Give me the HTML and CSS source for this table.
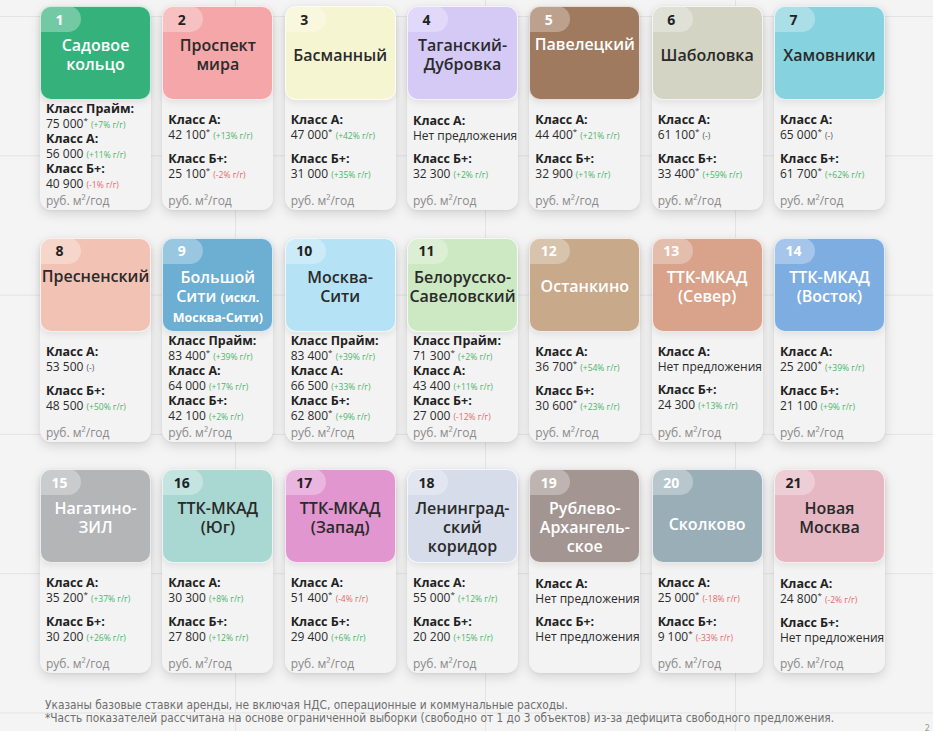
FILE: index.html
```html
<!DOCTYPE html>
<html lang="ru">
<head>
<meta charset="utf-8">
<title>Ставки аренды</title>
<link rel="stylesheet" href="styles.css">
</head>
<body>
<main class="page">
  <section class="grid">

    <div class="card light-text">
      <div class="head c1"><span class="num">1</span><div class="title"><span>Садовое<br>кольцо</span></div></div>
      <div class="body">
        <div class="rates dense">
          <div class="rate"><div class="lbl">Класс Прайм:</div><div class="val">75 000<sup>*</sup> <span class="up">(+7% г/г)</span></div></div>
          <div class="rate"><div class="lbl">Класс А:</div><div class="val">56 000 <span class="up">(+11% г/г)</span></div></div>
          <div class="rate"><div class="lbl">Класс Б+:</div><div class="val">40 900 <span class="down">(-1% г/г)</span></div></div>
        </div>
        <div class="unit">руб. м²/год</div>
      </div>
    </div>

    <div class="card">
      <div class="head c2"><span class="num">2</span><div class="title"><span>Проспект<br>мира</span></div></div>
      <div class="body">
        <div class="rates">
          <div class="rate"><div class="lbl">Класс А:</div><div class="val">42 100<sup>*</sup> <span class="up">(+13% г/г)</span></div></div>
          <div class="rate"><div class="lbl">Класс Б+:</div><div class="val">25 100<sup>*</sup> <span class="down">(-2% г/г)</span></div></div>
        </div>
        <div class="unit">руб. м²/год</div>
      </div>
    </div>

    <div class="card">
      <div class="head c3"><span class="num">3</span><div class="title"><span>Басманный</span></div></div>
      <div class="body">
        <div class="rates">
          <div class="rate"><div class="lbl">Класс А:</div><div class="val">47 000<sup>*</sup> <span class="up">(+42% г/г)</span></div></div>
          <div class="rate"><div class="lbl">Класс Б+:</div><div class="val">31 000 <span class="up">(+35% г/г)</span></div></div>
        </div>
        <div class="unit">руб. м²/год</div>
      </div>
    </div>

    <div class="card">
      <div class="head c4"><span class="num">4</span><div class="title"><span>Таганский-<br>Дубровка</span></div></div>
      <div class="body">
        <div class="rates">
          <div class="rate"><div class="lbl">Класс А:</div><div class="val">Нет предложения</div></div>
          <div class="rate"><div class="lbl">Класс Б+:</div><div class="val">32 300 <span class="up">(+2% г/г)</span></div></div>
        </div>
        <div class="unit">руб. м²/год</div>
      </div>
    </div>

    <div class="card light-text">
      <div class="head c5"><span class="num">5</span><div class="title top"><span>Павелецкий</span></div></div>
      <div class="body">
        <div class="rates">
          <div class="rate"><div class="lbl">Класс А:</div><div class="val">44 400<sup>*</sup> <span class="up">(+21% г/г)</span></div></div>
          <div class="rate"><div class="lbl">Класс Б+:</div><div class="val">32 900 <span class="up">(+1% г/г)</span></div></div>
        </div>
        <div class="unit">руб. м²/год</div>
      </div>
    </div>

    <div class="card">
      <div class="head c6"><span class="num">6</span><div class="title"><span>Шаболовка</span></div></div>
      <div class="body">
        <div class="rates">
          <div class="rate"><div class="lbl">Класс А:</div><div class="val">61 100<sup>*</sup> <span class="flat">(-)</span></div></div>
          <div class="rate"><div class="lbl">Класс Б+:</div><div class="val">33 400<sup>*</sup> <span class="up">(+59% г/г)</span></div></div>
        </div>
        <div class="unit">руб. м²/год</div>
      </div>
    </div>

    <div class="card">
      <div class="head c7"><span class="num">7</span><div class="title"><span>Хамовники</span></div></div>
      <div class="body">
        <div class="rates">
          <div class="rate"><div class="lbl">Класс А:</div><div class="val">65 000<sup>*</sup> <span class="flat">(-)</span></div></div>
          <div class="rate"><div class="lbl">Класс Б+:</div><div class="val">61 700<sup>*</sup> <span class="up">(+62% г/г)</span></div></div>
        </div>
        <div class="unit">руб. м²/год</div>
      </div>
    </div>

    <div class="card">
      <div class="head c8"><span class="num">8</span><div class="title top"><span>Пресненский</span></div></div>
      <div class="body">
        <div class="rates">
          <div class="rate"><div class="lbl">Класс А:</div><div class="val">53 500 <span class="flat">(-)</span></div></div>
          <div class="rate"><div class="lbl">Класс Б+:</div><div class="val">48 500 <span class="up">(+50% г/г)</span></div></div>
        </div>
        <div class="unit">руб. м²/год</div>
      </div>
    </div>

    <div class="card light-text">
      <div class="head c9"><span class="num">9</span><div class="title"><span>Большой<br>Сити <small>(искл.</small><br><small>Москва-Сити)</small></span></div></div>
      <div class="body">
        <div class="rates dense">
          <div class="rate"><div class="lbl">Класс Прайм:</div><div class="val">83 400<sup>*</sup> <span class="up">(+39% г/г)</span></div></div>
          <div class="rate"><div class="lbl">Класс А:</div><div class="val">64 000 <span class="up">(+17% г/г)</span></div></div>
          <div class="rate"><div class="lbl">Класс Б+:</div><div class="val">42 100 <span class="up">(+2% г/г)</span></div></div>
        </div>
        <div class="unit">руб. м²/год</div>
      </div>
    </div>

    <div class="card">
      <div class="head c10"><span class="num">10</span><div class="title"><span>Москва-<br>Сити</span></div></div>
      <div class="body">
        <div class="rates dense">
          <div class="rate"><div class="lbl">Класс Прайм:</div><div class="val">83 400<sup>*</sup> <span class="up">(+39% г/г)</span></div></div>
          <div class="rate"><div class="lbl">Класс А:</div><div class="val">66 500 <span class="up">(+33% г/г)</span></div></div>
          <div class="rate"><div class="lbl">Класс Б+:</div><div class="val">62 800<sup>*</sup> <span class="up">(+9% г/г)</span></div></div>
        </div>
        <div class="unit">руб. м²/год</div>
      </div>
    </div>

    <div class="card">
      <div class="head c11"><span class="num">11</span><div class="title"><span>Белорусско-<br>Савеловский</span></div></div>
      <div class="body">
        <div class="rates dense">
          <div class="rate"><div class="lbl">Класс Прайм:</div><div class="val">71 300<sup>*</sup> <span class="up">(+2% г/г)</span></div></div>
          <div class="rate"><div class="lbl">Класс А:</div><div class="val">43 400 <span class="up">(+11% г/г)</span></div></div>
          <div class="rate"><div class="lbl">Класс Б+:</div><div class="val">27 000 <span class="down">(-12% г/г)</span></div></div>
        </div>
        <div class="unit">руб. м²/год</div>
      </div>
    </div>

    <div class="card light-text">
      <div class="head c12"><span class="num">12</span><div class="title"><span>Останкино</span></div></div>
      <div class="body">
        <div class="rates">
          <div class="rate"><div class="lbl">Класс А:</div><div class="val">36 700<sup>*</sup> <span class="up">(+54% г/г)</span></div></div>
          <div class="rate"><div class="lbl">Класс Б+:</div><div class="val">30 600<sup>*</sup> <span class="up">(+23% г/г)</span></div></div>
        </div>
        <div class="unit">руб. м²/год</div>
      </div>
    </div>

    <div class="card light-text">
      <div class="head c13"><span class="num">13</span><div class="title"><span>ТТК-МКАД<br>(Север)</span></div></div>
      <div class="body">
        <div class="rates">
          <div class="rate"><div class="lbl">Класс А:</div><div class="val">Нет предложения</div></div>
          <div class="rate"><div class="lbl">Класс Б+:</div><div class="val">24 300 <span class="up">(+13% г/г)</span></div></div>
        </div>
        <div class="unit">руб. м²/год</div>
      </div>
    </div>

    <div class="card light-text">
      <div class="head c14"><span class="num">14</span><div class="title"><span>ТТК-МКАД<br>(Восток)</span></div></div>
      <div class="body">
        <div class="rates">
          <div class="rate"><div class="lbl">Класс А:</div><div class="val">25 200<sup>*</sup> <span class="up">(+39% г/г)</span></div></div>
          <div class="rate"><div class="lbl">Класс Б+:</div><div class="val">21 100 <span class="up">(+9% г/г)</span></div></div>
        </div>
        <div class="unit">руб. м²/год</div>
      </div>
    </div>

    <div class="card light-text">
      <div class="head c15"><span class="num">15</span><div class="title"><span>Нагатино-<br>ЗИЛ</span></div></div>
      <div class="body">
        <div class="rates">
          <div class="rate"><div class="lbl">Класс А:</div><div class="val">35 200<sup>*</sup> <span class="up">(+37% г/г)</span></div></div>
          <div class="rate"><div class="lbl">Класс Б+:</div><div class="val">30 200 <span class="up">(+26% г/г)</span></div></div>
        </div>
        <div class="unit">руб. м²/год</div>
      </div>
    </div>

    <div class="card">
      <div class="head c16"><span class="num">16</span><div class="title"><span>ТТК-МКАД<br>(Юг)</span></div></div>
      <div class="body">
        <div class="rates">
          <div class="rate"><div class="lbl">Класс А:</div><div class="val">30 300 <span class="up">(+8% г/г)</span></div></div>
          <div class="rate"><div class="lbl">Класс Б+:</div><div class="val">27 800 <span class="up">(+12% г/г)</span></div></div>
        </div>
        <div class="unit">руб. м²/год</div>
      </div>
    </div>

    <div class="card">
      <div class="head c17"><span class="num">17</span><div class="title"><span>ТТК-МКАД<br>(Запад)</span></div></div>
      <div class="body">
        <div class="rates">
          <div class="rate"><div class="lbl">Класс А:</div><div class="val">51 400<sup>*</sup> <span class="down">(-4% г/г)</span></div></div>
          <div class="rate"><div class="lbl">Класс Б+:</div><div class="val">29 400 <span class="up">(+6% г/г)</span></div></div>
        </div>
        <div class="unit">руб. м²/год</div>
      </div>
    </div>

    <div class="card">
      <div class="head c18"><span class="num">18</span><div class="title"><span>Ленинград-<br>ский<br>коридор</span></div></div>
      <div class="body">
        <div class="rates">
          <div class="rate"><div class="lbl">Класс А:</div><div class="val">55 000<sup>*</sup> <span class="up">(+12% г/г)</span></div></div>
          <div class="rate"><div class="lbl">Класс Б+:</div><div class="val">20 200 <span class="up">(+15% г/г)</span></div></div>
        </div>
        <div class="unit">руб. м²/год</div>
      </div>
    </div>

    <div class="card light-text">
      <div class="head c19"><span class="num">19</span><div class="title"><span>Рублево-<br>Архангель-<br>ское</span></div></div>
      <div class="body">
        <div class="rates">
          <div class="rate"><div class="lbl">Класс А:</div><div class="val">Нет предложения</div></div>
          <div class="rate"><div class="lbl">Класс Б+:</div><div class="val">Нет предложения</div></div>
        </div>
        <div class="unit blank">&nbsp;</div>
      </div>
    </div>

    <div class="card light-text">
      <div class="head c20"><span class="num">20</span><div class="title low"><span>Сколково</span></div></div>
      <div class="body">
        <div class="rates">
          <div class="rate"><div class="lbl">Класс А:</div><div class="val">25 000<sup>*</sup> <span class="down">(-18% г/г)</span></div></div>
          <div class="rate"><div class="lbl">Класс Б+:</div><div class="val">9 100<sup>*</sup> <span class="down">(-33% г/г)</span></div></div>
        </div>
        <div class="unit">руб. м²/год</div>
      </div>
    </div>

    <div class="card">
      <div class="head c21"><span class="num">21</span><div class="title"><span>Новая<br>Москва</span></div></div>
      <div class="body">
        <div class="rates">
          <div class="rate"><div class="lbl">Класс А:</div><div class="val">24 800<sup>*</sup> <span class="down">(-2% г/г)</span></div></div>
          <div class="rate"><div class="lbl">Класс Б+:</div><div class="val">Нет предложения</div></div>
        </div>
        <div class="unit">руб. м²/год</div>
      </div>
    </div>

  </section>

  <footer class="foot">
    <div class="notes">
      <p>Указаны базовые ставки аренды, не включая НДС, операционные и коммунальные расходы.</p>
      <p>*Часть показателей рассчитана на основе ограниченной выборки (свободно от 1 до 3 объектов) из-за дефицита свободного предложения.</p>
    </div>
    <div class="pageno">2</div>
  </footer>
</main>
</body>
</html>
```

FILE: styles.css
```css
* { box-sizing: border-box; }

html, body {
  margin: 0;
  padding: 0;
}

body {
  width: 933px;
  height: 731px;
  overflow: hidden;
  font-family: "Open Sans", "DejaVu Sans", sans-serif;
  color: #262626;
  background-color: #f4f4f4;
  background-image:
    linear-gradient(to right, #e3e3e3 1px, transparent 1px),
    linear-gradient(to bottom, #e3e3e3 1px, transparent 1px);
  background-size: 250px 139.3px;
  background-position: 235px 16px;
}

.page {
  display: flex;
  flex-direction: column;
  padding: 6px 0 0 40px;
}

.grid {
  display: grid;
  grid-template-columns: repeat(7, 111px);
  column-gap: 11.33px;
  row-gap: 27.5px;
}

.card {
  height: 204px;
  display: flex;
  flex-direction: column;
  background: #f3f3f3;
  border-radius: 11px;
  box-shadow: 0 4px 12px rgba(0, 0, 0, 0.13), 0 1px 3px rgba(0, 0, 0, 0.05);
}

.head {
  height: 94px;
  flex: none;
  display: flex;
  flex-direction: column;
  border-radius: 11px;
  border: 1.5px solid rgba(255, 255, 255, 0.75);
  overflow: hidden;
  box-shadow: 0 3px 6px rgba(0, 0, 0, 0.07);
}

.num {
  align-self: flex-start;
  width: 41px;
  height: 26px;
  flex: none;
  display: flex;
  align-items: center;
  justify-content: center;
  padding-right: 2px;
  margin: -1px 0 0 -1px;
  border-radius: 0 14px 14px 0;
  background: rgba(255, 255, 255, 0.3);
  font-weight: 700;
  font-size: 14px;
  color: #222;
}

.title {
  margin-top: 4px;
  min-height: 38px;
  display: flex;
  align-items: center;
  justify-content: center;
  text-align: center;
  font-size: 16px;
  line-height: 19px;
  font-weight: 600;
  color: #2a2a2a;
  white-space: nowrap;
}

.title.top { align-items: flex-start; margin-top: 3px; }
.title.low { margin-top: 10px; }

.title small {
  font-size: 12.5px;
  font-weight: 700;
}

.light-text .num { color: #fff; }
.light-text .title { color: #fff; }

.body {
  flex: 1;
  display: flex;
  flex-direction: column;
  padding: 0 4px 2px 6px;
}

.rates {
  flex: 1;
  display: flex;
  flex-direction: column;
  justify-content: center;
  gap: 8px;
}

.rates.dense { gap: 0; }

.lbl {
  font-size: 12.5px;
  line-height: 15px;
  font-weight: 700;
  color: #222;
  white-space: nowrap;
}

.rates.dense .lbl { line-height: 14px; }

.val {
  font-size: 12px;
  line-height: 15px;
  color: #2b2b2b;
  white-space: nowrap;
}

.val sup {
  font-size: 8px;
  line-height: 0;
  vertical-align: 5px;
}

.up, .down, .flat {
  font-size: 8.5px;
}

.up { color: #4bb36b; }
.down { color: #e46a6a; }
.flat { color: #555; }

.unit {
  font-size: 12px;
  line-height: 14px;
  color: #8a8a8a;
  flex: none;
}

.unit.blank { visibility: hidden; }

.foot {
  display: flex;
  justify-content: space-between;
  margin-top: 26px;
  padding-left: 5px;
  font-family: "DejaVu Sans Condensed", "DejaVu Sans", sans-serif;
  font-stretch: condensed;
  color: #6e6e6e;
}

.notes p {
  margin: 0;
  font-size: 11.8px;
  line-height: 13px;
}

.pageno {
  align-self: flex-end;
  font-size: 9px;
  color: #999;
  margin: 0 3px -8px 0;
}

.c1 { background: #35b27c; }
.c2 { background: #f4a6a8; }
.c3 { background: #f6f5d2; }
.c4 { background: #d5c9f6; }
.c5 { background: #a07a5e; }
.c6 { background: #d3d4c4; }
.c7 { background: #86d2de; }
.c8 { background: #f2c3b5; }
.c9 { background: #6daed3; }
.c10 { background: #b5e3f5; }
.c11 { background: #cde9c3; }
.c12 { background: #c8a98a; }
.c13 { background: #d8a38a; }
.c14 { background: #7eaee1; }
.c15 { background: #b3b5b6; }
.c16 { background: #a9d8d2; }
.c17 { background: #e196d0; }
.c18 { background: #d6dcea; }
.c19 { background: #a39592; }
.c20 { background: #9aaeb8; }
.c21 { background: #e6b8c4; }
```
